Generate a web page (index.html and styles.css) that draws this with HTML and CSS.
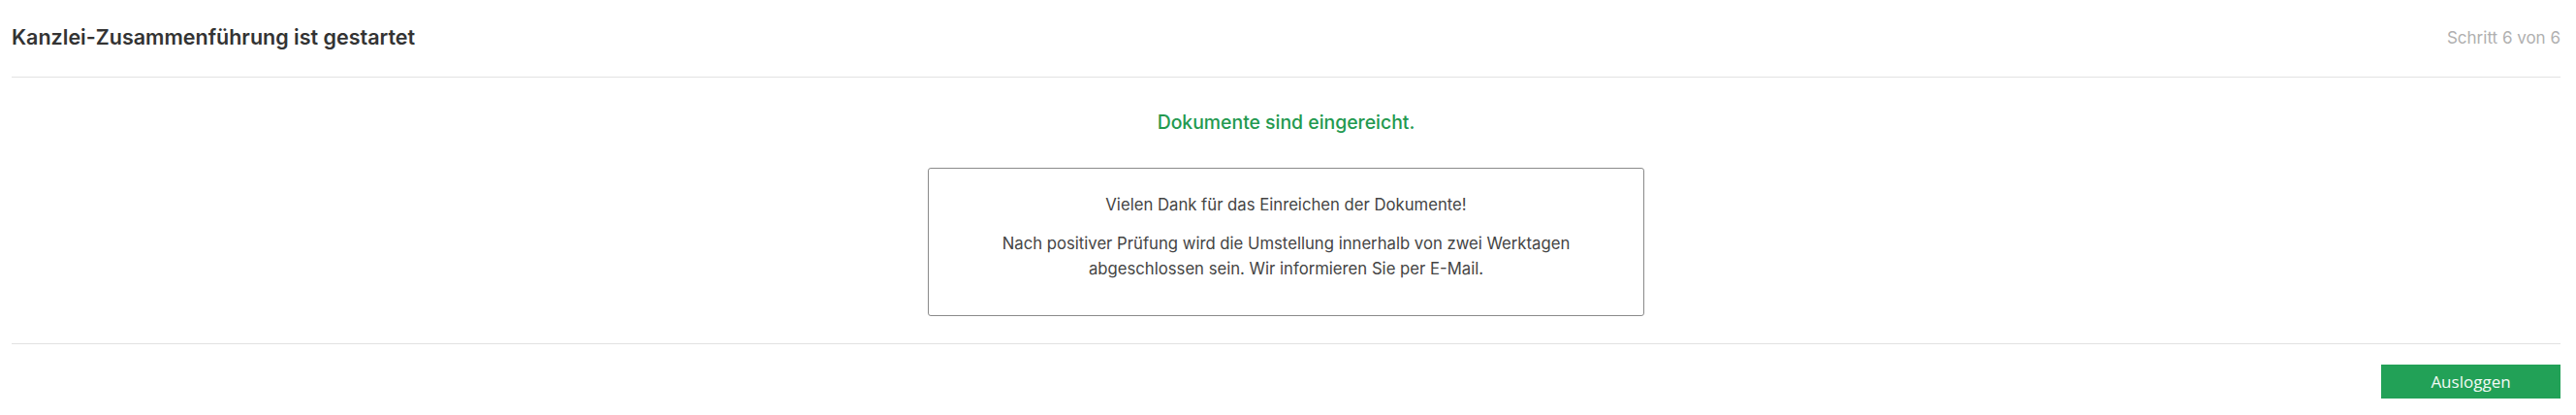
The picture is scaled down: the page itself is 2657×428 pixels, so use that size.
FILE: index.html
```html
<!DOCTYPE html>
<html lang="de">
<head>
    <meta charset="UTF-8">
    <meta name="viewport" content="width=device-width, initial-scale=1.0">
    <title>Kanzlei-Zusammenführung</title>
    <link rel="stylesheet" href="styles.css">
</head>
<body>
    <div class="page">
        <header class="page-header">
            <h1>Kanzlei-Zusammenführung ist gestartet</h1>
            <span class="step">Schritt 6 von 6</span>
        </header>

        <main class="content">
            <h2 class="status">Dokumente sind eingereicht.</h2>
            <div class="notice">
                <p>Vielen Dank für das Einreichen der Dokumente!</p>
                <p>Nach positiver Prüfung wird die Umstellung innerhalb von zwei Werktagen<br>abgeschlossen sein. Wir informieren Sie per E-Mail.</p>
            </div>
        </main>

        <footer class="actions">
            <button id="logout-button">Ausloggen</button>
        </footer>
    </div>
</body>
</html>
```

FILE: styles.css
```css
body {
    font-family: Inter, "Noto Sans", sans-serif;
    margin: 0;
    padding: 0;
    background-color: #fff;
    color: #444;
}
.page {
    margin: 0 16px 0 12px;
}
.page-header {
    display: flex;
    justify-content: space-between;
    align-items: center;
    height: 79px;
    border-bottom: 1px solid #e2e2e2;
}
h1 {
    margin: 0 0 4px 0;
    font-size: 21.5px;
    font-weight: 600;
    color: #333;
}
.step {
    margin-bottom: 2px;
    font-size: 17px;
    color: #b0b0b0;
}
.content {
    display: flex;
    flex-direction: column;
    align-items: center;
    padding: 34px 0 28px;
    border-bottom: 1px solid #e2e2e2;
}
.status {
    margin: 0 0 35px 0;
    font-size: 19.4px;
    line-height: 24px;
    font-weight: 500;
    color: #23994f;
}
.notice {
    width: 737px;
    padding: 24px 0 35px;
    border: 1px solid #8a8a8a;
    border-radius: 3px;
    text-align: center;
    font-size: 16.7px;
    line-height: 26px;
    color: #444;
}
.notice p {
    margin: 0;
}
.notice p + p {
    margin-top: 14px;
}
.actions {
    display: flex;
    justify-content: flex-end;
    padding-top: 21px;
}
button {
    width: 185px;
    height: 35px;
    background-color: #22a157;
    color: #f2faf5;
    border: none;
    border-radius: 0;
    font-family: "Open Sans", sans-serif;
    font-size: 17px;
    cursor: pointer;
}
button:hover {
    background-color: #1d8c4b;
}
```
